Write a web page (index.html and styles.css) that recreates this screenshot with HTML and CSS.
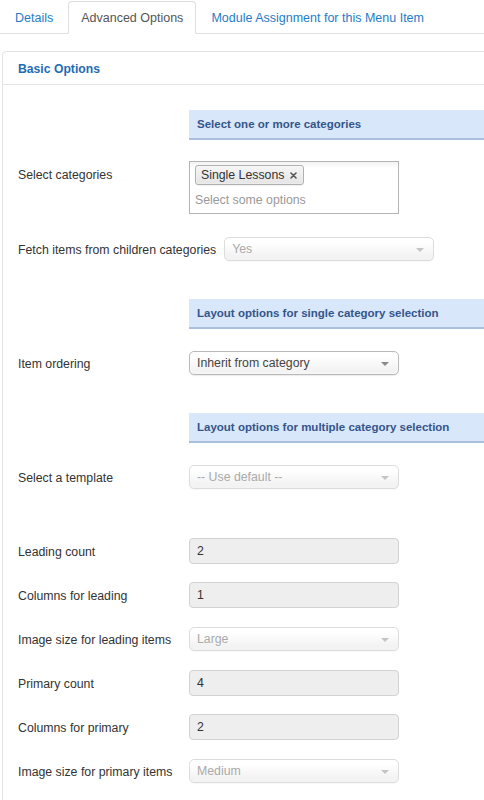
FILE: index.html
```html
<!DOCTYPE html>
<html>
<head>
<meta charset="utf-8">
<link rel="stylesheet" href="styles.css">
</head>
<body>
<ul class="tabs">
  <li class="tab"><a>Details</a></li>
  <li class="tab active"><a>Advanced Options</a></li>
  <li class="tab"><a>Module Assignment for this Menu Item</a></li>
</ul>

<div class="panel">
  <div class="panel-head">Basic Options</div>
  <div class="panel-body">
    <div class="spacer s1">Select one or more categories</div>

    <div class="row multi-row">
      <label class="lbl">Select categories</label>
      <div class="multi">
        <span class="tag">Single Lessons <svg class="x" width="7" height="7" viewBox="0 0 7 7"><path d="M1 1L6 6M6 1L1 6" stroke="#555" stroke-width="1.6" stroke-linecap="round"/></svg></span>
        <span class="ph">Select some options</span>
      </div>
    </div>

    <div class="row sel-row fetch">
      <label class="lbl">Fetch items from children categories</label>
      <div class="select disabled">Yes</div>
    </div>

    <div class="spacer s2">Layout options for single category selection</div>

    <div class="row sel-row">
      <label class="lbl">Item ordering</label>
      <div class="select">Inherit from category</div>
    </div>

    <div class="spacer s2">Layout options for multiple category selection</div>

    <div class="row sel-row">
      <label class="lbl">Select a template</label>
      <div class="select disabled">-- Use default --</div>
    </div>

    <div class="grid-rows">
      <div class="row fr">
        <label class="lbl">Leading count</label>
        <div class="input">2</div>
      </div>
      <div class="row fr">
        <label class="lbl">Columns for leading</label>
        <div class="input">1</div>
      </div>
      <div class="row fr">
        <label class="lbl">Image size for leading items</label>
        <div class="select disabled">Large</div>
      </div>
      <div class="row fr">
        <label class="lbl">Primary count</label>
        <div class="input">4</div>
      </div>
      <div class="row fr">
        <label class="lbl">Columns for primary</label>
        <div class="input">2</div>
      </div>
      <div class="row fr">
        <label class="lbl">Image size for primary items</label>
        <div class="select disabled">Medium</div>
      </div>
    </div>
  </div>
</div>
</body>
</html>
```

FILE: styles.css
```css
html, body {
  margin: 0;
  padding: 0;
  overflow: hidden;
  background: #fff;
}
body {
  font-family: "Liberation Sans", Arial, Helvetica, sans-serif;
  font-size: 12.3px;
  color: #333;
  width: 484px;
  height: 800px;
}

/* Tabs */
.tabs {
  list-style: none;
  margin: 0;
  padding: 1px 0 0 2px;
  display: flex;
  border-bottom: 1px solid #e2e2e2;
  height: 34px;
  box-sizing: border-box;
  width: 600px;
}
.tab {
  margin-right: 2px;
  margin-bottom: -1px;
}
.tab a {
  display: block;
  padding: 0 12px;
  height: 33px;
  line-height: 32px;
  border: 1px solid transparent;
  border-radius: 4px 4px 0 0;
  color: #1f7cc7;
  font-size: 12.5px;
  box-sizing: border-box;
}
.tab.active a {
  border-color: #dedede;
  border-bottom-color: #fff;
  background: #fff;
  color: #555;
}

/* Panel */
.panel {
  margin: 17px 0 0 2px;
  width: 560px;
  border: 1px solid #e3e3e3;
  border-radius: 4px 0 0 0;
  min-height: 760px;
}
.panel-head {
  height: 32px;
  line-height: 34px;
  padding-left: 15px;
  font-weight: bold;
  font-size: 12.2px;
  color: #1e6cb4;
  border-bottom: 1px solid #e5e5e5;
}
.panel-body {
  padding: 25px 0 0 15px;
}

/* Spacer bars */
.spacer {
  margin-left: 171px;
  height: 30px;
  box-sizing: border-box;
  background: #d8e7f9;
  border-bottom: 2px solid #a9bfdb;
  padding-left: 8px;
  line-height: 29px;
  font-weight: bold;
  font-size: 11.5px;
  color: #35558a;
}
.s1 { margin-bottom: 21px; }
.s2 { margin-top: 38px; margin-bottom: 22px; }

/* Rows */
.row {
  display: flex;
  align-items: center;
}
.lbl {
  min-width: 163px;
  margin-right: 8px;
  white-space: nowrap;
  line-height: 15px;
  padding-top: 2px;
}
.multi-row {
  align-items: flex-start;
  margin-bottom: 23px;
}
.multi-row .lbl {
  padding-top: 7px;
}
.sel-row {
  height: 24px;
}

/* Multi select (chosen) */
.multi {
  width: 210px;
  height: 53px;
  box-sizing: border-box;
  border: 1px solid #b4b4b4;
  background: linear-gradient(#f2f2f2 0, #fff 6px, #fff 100%);
  padding: 3px 5px;
  display: flex;
  flex-direction: column;
  align-items: flex-start;
}
.tag {
  display: inline-flex;
  align-items: center;
  height: 21px;
  box-sizing: border-box;
  border: 1px solid #b0b0b0;
  border-radius: 3px;
  background: linear-gradient(#f6f6f6, #e4e4e4);
  padding: 0 6px 0 5px;
  color: #333;
  box-shadow: 0 0 2px #fff inset, 0 1px 0 rgba(0,0,0,0.05);
}
.tag .x {
  margin-left: 6px;
  display: block;
}
.ph {
  margin-top: 5px;
  color: #999;
  line-height: 20px;
}

/* Select (chosen single) */
.select {
  position: relative;
  width: 210px;
  height: 24px;
  box-sizing: border-box;
  border: 1px solid #b9b9b9;
  border-radius: 5px;
  background: linear-gradient(#ffffff 20%, #f3f3f3 80%);
  box-shadow: 0 1px 1px rgba(0,0,0,0.08), 0 0 3px #fff inset;
  padding-left: 7px;
  line-height: 22px;
  color: #444;
}
.select::after {
  content: "";
  position: absolute;
  right: 9px;
  top: 10px;
  border-left: 4px solid transparent;
  border-right: 4px solid transparent;
  border-top: 4px solid #8a8a8a;
}
.select.disabled {
  border-color: #dcdcdc;
  color: #aaa;
  box-shadow: 0 1px 1px rgba(0,0,0,0.03);
}
.select.disabled::after {
  border-top-color: #c4c4c4;
}

/* Inputs */
.grid-rows {
  margin-top: 49px;
  display: flex;
  flex-direction: column;
  gap: 18px;
}
.fr {
  height: 26px;
}
.input {
  width: 210px;
  height: 26px;
  box-sizing: border-box;
  border: 1px solid #d2d2d2;
  border-radius: 4px;
  background: #eeeeee;
  padding-left: 7px;
  line-height: 24px;
  color: #333;
}
```
